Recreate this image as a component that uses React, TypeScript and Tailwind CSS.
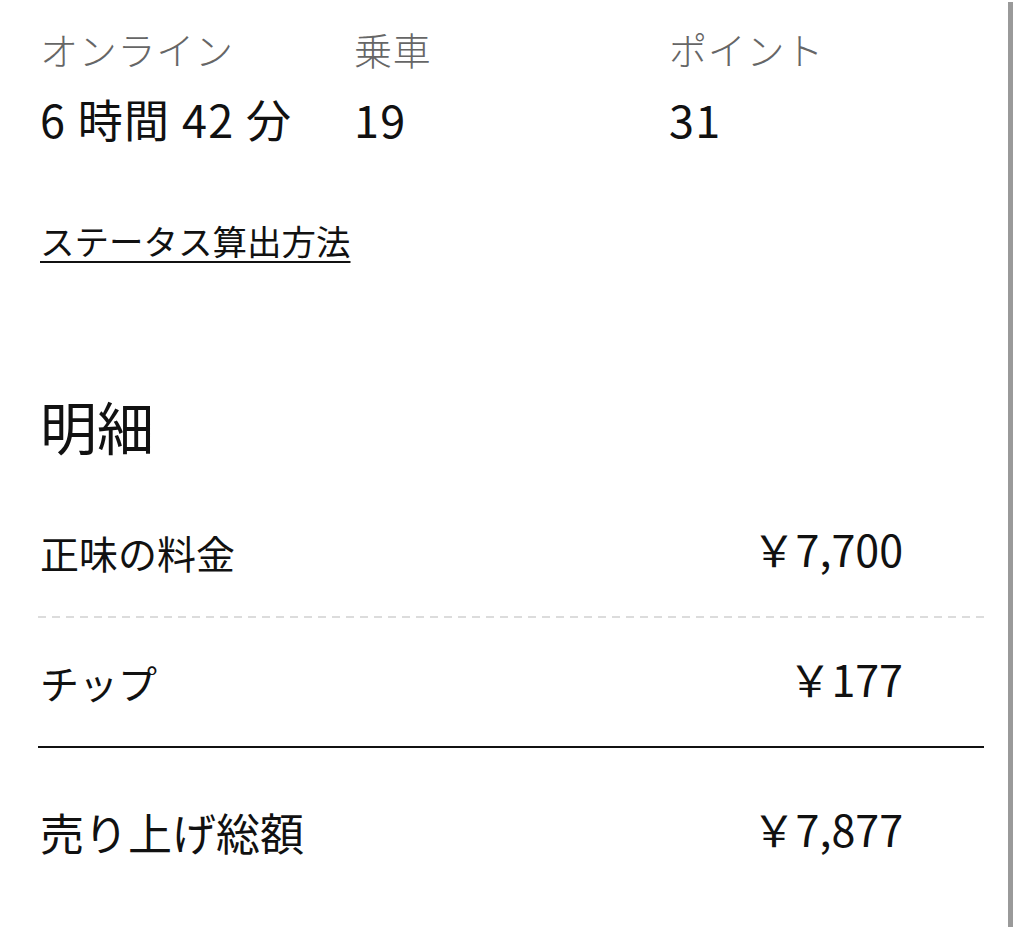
import React from "react";

const stats = [
  { label: "オンライン", value: "6 時間 42 分" },
  { label: "乗車", value: "19" },
  { label: "ポイント", value: "31" },
];

function Row({
  label,
  value,
  className,
  labelClass = "text-[39px]",
}: {
  label: string;
  value: string;
  className: string;
  labelClass?: string;
}) {
  return (
    <div className={`flex items-center justify-between pl-[2px] pr-[81px] ${className}`}>
      <span className={`${labelClass} leading-[50px] text-[#111]`}>{label}</span>
      <span className="text-[43px] leading-[50px] text-[#111] -translate-y-[4px]">{value}</span>
    </div>
  );
}

export default function App() {
  return (
    <div
      className="flex w-[1024px] h-[927px] bg-white overflow-hidden"
      style={{ fontFamily: "'Noto Sans CJK JP', 'Noto Sans', sans-serif" }}
    >
      <main className="flex-1 pl-[38px] pr-[24px]">
        {/* Stats */}
        <div className="grid grid-cols-[314px_315px_1fr] pl-[2px] pt-[26px]">
          {stats.map((s) => (
            <div key={s.label} className="flex flex-col">
              <span className="text-[38px] leading-[46px] text-[#666] font-light tracking-[0.02em]">{s.label}</span>
              <span className="mt-[20px] text-[45px] leading-[54px] text-[#111] tracking-[0.03em]">{s.value}</span>
            </div>
          ))}
        </div>

        <div className="pl-[2px] mt-[72px]">
          <a className="text-[34.5px] leading-[44px] text-[#111] underline underline-offset-[6px] decoration-[2px]">
            ステータス算出方法
          </a>
        </div>

        <h2 className="pl-[2px] mt-[130px] text-[57px] leading-[66px] text-[#111] font-normal">明細</h2>

        <div className="mt-[30px]">
          <Row label="正味の料金" value="￥7,700" className="h-[128px]" />
          <div className="h-[2px] bg-[linear-gradient(to_right,#dcdcdc_8px,transparent_8px)] bg-[length:14px_2px]" />
          <Row label="チップ" value="￥177" className="h-[128px]" />
          <div className="h-[2px] bg-[#111]" />
          <Row label="売り上げ総額" value="￥7,877" className="h-[168px]" labelClass="text-[44px]" />
        </div>
      </main>
      <div className="w-[5px] mt-[2px] bg-[#9a9a9a] mr-[11px]" />
    </div>
  );
}
